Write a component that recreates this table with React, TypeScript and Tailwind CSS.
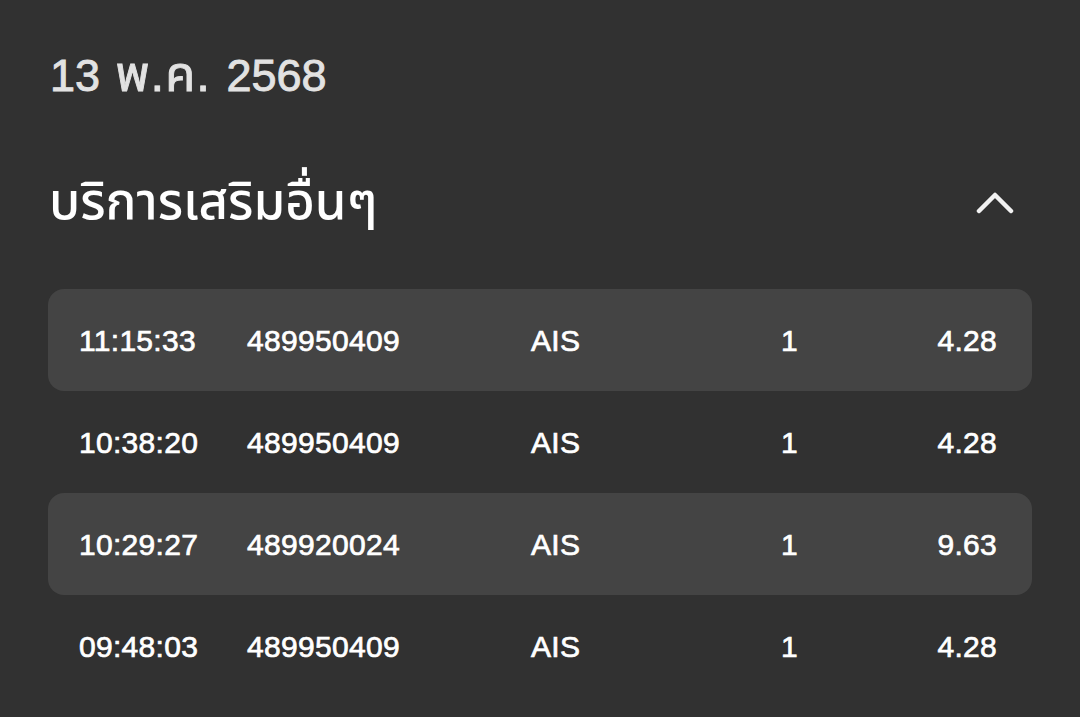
import React from 'react';

const rows = [
  { time: '11:15:33', number: '489950409', operator: 'AIS', qty: '1', amount: '4.28' },
  { time: '10:38:20', number: '489950409', operator: 'AIS', qty: '1', amount: '4.28' },
  { time: '10:29:27', number: '489920024', operator: 'AIS', qty: '1', amount: '9.63' },
  { time: '09:48:03', number: '489950409', operator: 'AIS', qty: '1', amount: '4.28' },
];

const App: React.FC = () => {
  return (
    <div
      className="min-h-screen bg-[#313131] px-[48px] pt-[51px] text-white"
      style={{ fontFamily: '"Liberation Sans", "Noto Sans Thai", "Noto Sans", sans-serif' }}
    >
      {/* Date */}
      <h2 className="pl-[2px] text-[45px] leading-[50px] font-normal text-[#e2e2e2] [-webkit-text-stroke:0.9px_#e2e2e2] [word-spacing:3px]">
        13 <span className="text-[49px] leading-[30px] tracking-[1px]">พ.ค.</span> 2568
      </h2>

      {/* Section header */}
      <div className="mt-[70px] flex items-center justify-between pl-[1px] pr-[18px]">
        <h1 className="text-[51px] leading-[62px] font-medium text-white">บริการเสริมอื่นๆ</h1>
        <svg width="38" height="24" viewBox="0 0 38 24" fill="none" className="text-[#f2f2f2]">
          <path d="M3 21 L19 5 L35 21" stroke="currentColor" strokeWidth="4.5" strokeLinecap="round" strokeLinejoin="round" />
        </svg>
      </div>

      {/* Rows */}
      <div className="mt-[56px] flex flex-col">
        {rows.map((row, i) => (
          <div
            key={i}
            className={`flex h-[102px] items-center rounded-[16px] pl-[31px] pr-[35px] text-[30px] tracking-[0.3px] font-normal text-white [-webkit-text-stroke:0.7px_white] ${
              i % 2 === 0 ? 'bg-[#444444]' : ''
            }`}
          >
            <span className="w-[168px]">{row.time}</span>
            <span className="w-[284px]">{row.number}</span>
            <span className="w-[250px]">{row.operator}</span>
            <span className="flex-1">{row.qty}</span>
            <span className="text-right">{row.amount}</span>
          </div>
        ))}
      </div>
    </div>
  );
};

export default App;
